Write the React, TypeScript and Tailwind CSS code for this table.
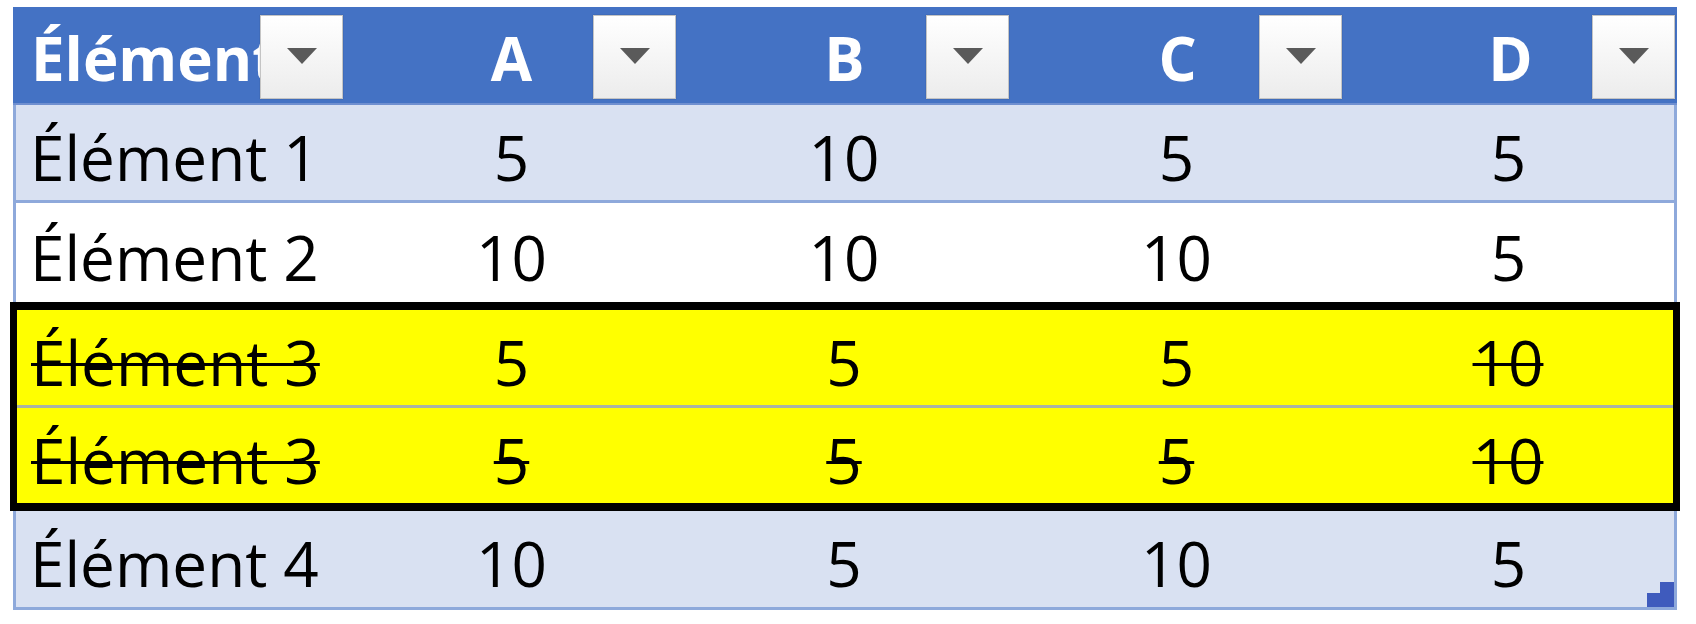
import React from "react";

const headerCols = "grid grid-cols-[332px_333px_333px_333px_333px]";
const rowCols = "grid grid-cols-[329px_333px_332px_333px_331px]";
const boxCols = "grid grid-cols-[328px_333px_332px_333px_330px]";

function DropButton() {
  return (
    <div className="absolute right-[2px] top-[8px] w-[83px] h-[84px] border border-[#c4c4c4] bg-linear-to-b from-white to-[#ececec] flex items-center justify-center shadow-[0_0_1px_rgba(0,0,0,0.3)]">
      <svg width="30" height="16" viewBox="0 0 30 16" className="-mt-[2px]">
        <polygon points="0,0 30,0 15,16" fill="#5a5a5a" />
      </svg>
    </div>
  );
}

type Cell = { text: string; strike?: boolean };

function DataCells({ cells }: { cells: Cell[] }) {
  return (
    <>
      {cells.map((c, i) => (
        <div
          key={i}
          className={
            "flex items-center pt-[8px] whitespace-nowrap " +
            (i === 0 ? "justify-start pl-[14px]" : "justify-center")
          }
        >
          <span
            className={
              c.strike
                ? "line-through decoration-[length:3px] decoration-black"
                : ""
            }
          >
            {c.text}
          </span>
        </div>
      ))}
    </>
  );
}

export default function App() {
  const r1: Cell[] = [{ text: "Élément 1" }, { text: "5" }, { text: "10" }, { text: "5" }, { text: "5" }];
  const r2: Cell[] = [{ text: "Élément 2" }, { text: "10" }, { text: "10" }, { text: "10" }, { text: "5" }];
  const r3: Cell[] = [
    { text: "Élément 3", strike: true },
    { text: "5" },
    { text: "5" },
    { text: "5" },
    { text: "10", strike: true },
  ];
  const r4: Cell[] = [
    { text: "Élément 3", strike: true },
    { text: "5", strike: true },
    { text: "5", strike: true },
    { text: "5", strike: true },
    { text: "10", strike: true },
  ];
  const r5: Cell[] = [{ text: "Élément 4" }, { text: "10" }, { text: "5" }, { text: "10" }, { text: "5" }];

  return (
    <div
      className="w-[1696px] h-[624px] bg-white pt-[7px] pl-[13px] text-black text-[62px] leading-none"
      style={{ fontFamily: "'Open Sans', 'Noto Sans', sans-serif" }}
    >
      <div className="w-[1664px] flex flex-col">
        {/* Header */}
        <div className={headerCols + " h-[98px] bg-[#4472C4] border-b-[2px] border-[#6f8fd0] text-white font-bold text-[60px]"}>
          {["Élément", "A", "B", "C", "D"].map((h, i) => (
            <div key={i} className="relative overflow-hidden">
              <div
                className={
                  "h-full flex items-center pt-[6px] whitespace-nowrap " +
                  (i === 0 ? "justify-start pl-[18px]" : "justify-center")
                }
              >
                {h}
              </div>
              <DropButton />
            </div>
          ))}
        </div>

        {/* Row 1 */}
        <div className={rowCols + " h-[98px] bg-[#D9E1F2] border-x-[3px] border-b-[3px] border-[#8EA9DB]"}>
          <DataCells cells={r1} />
        </div>

        {/* Row 2 */}
        <div className={rowCols + " h-[99px] bg-white border-x-[3px] border-[#8EA9DB]"}>
          <DataCells cells={r2} />
        </div>

        {/* Highlighted box */}
        <div className="-mx-[3px] border-y-[8px] border-x-[7px] border-black bg-[#FFFF00] flex flex-col">
          <div className={boxCols + " h-[95px]"}>
            <DataCells cells={r3} />
          </div>
          <div className="h-[3px] bg-[#a9b3a4]" />
          <div className={boxCols + " h-[95px]"}>
            <DataCells cells={r4} />
          </div>
        </div>

        {/* Row 5 */}
        <div className={rowCols + " relative h-[99px] bg-[#D9E1F2] border-x-[3px] border-b-[3px] border-[#8EA9DB]"}>
          <DataCells cells={r5} />
          <svg
            width="27"
            height="25"
            viewBox="0 0 27 25"
            className="absolute right-0 bottom-0"
          >
            <polygon points="13,0 27,0 27,25 0,25 0,11 13,11" fill="#3f5bbd" />
          </svg>
        </div>
      </div>
    </div>
  );
}
